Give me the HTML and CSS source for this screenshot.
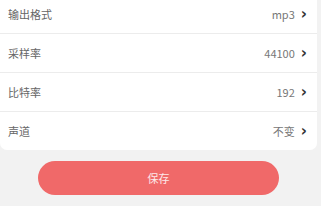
FILE: index.html
```html
<!DOCTYPE html>
<html lang="zh">
<head>
    <meta charset="UTF-8">
    <meta name="viewport" content="width=device-width, initial-scale=1.0">
    <link rel="stylesheet" href="styles.css">
    <title>设置</title>
</head>
<body>
    <div class="card">
        <div class="row">
            <span class="label">输出格式</span>
            <span class="value">mp3</span>
            <span class="arrow">&#x203A;</span>
        </div>
        <div class="row">
            <span class="label">采样率</span>
            <span class="value">44100</span>
            <span class="arrow">&#x203A;</span>
        </div>
        <div class="row">
            <span class="label">比特率</span>
            <span class="value">192</span>
            <span class="arrow">&#x203A;</span>
        </div>
        <div class="row">
            <span class="label">声道</span>
            <span class="value">不变</span>
            <span class="arrow">&#x203A;</span>
        </div>
    </div>
    <div class="actions">
        <button class="save">保存</button>
    </div>
</body>
</html>
```

FILE: styles.css
```css
body{
    margin: 0;
    padding: 0;
    background-color: #f2f2f2;
    font-family: "Noto Sans CJK SC", "Noto Sans", sans-serif;
    overflow: hidden;
}

.card{
    background: #fff;
    margin: -5px 4px 0 0;
    border-radius: 0 0 7px 7px;
}

.row{
    display: flex;
    align-items: center;
    height: 38px;
    padding: 0 10px 0 8px;
    border-bottom: 1px solid #ececec;
    font-size: 11px;
}

.row:last-child{
    border-bottom: none;
}

.label{
    flex: 1;
    color: #666;
}

.value{
    color: #777;
}

.arrow{
    margin-left: 6px;
    color: #333;
    font-size: 15px;
    font-weight: bold;
    line-height: 1;
    font-family: "DejaVu Sans", sans-serif;
}

.actions{
    display: flex;
    justify-content: center;
    padding: 11px 0 0 0;
}

.save{
    width: 241px;
    height: 34px;
    margin-left: -4px;
    border: none;
    border-radius: 17px;
    background: #f06969;
    color: #fdeaea;
    font-size: 11px;
    font-family: "Noto Sans CJK SC", sans-serif;
}
```
